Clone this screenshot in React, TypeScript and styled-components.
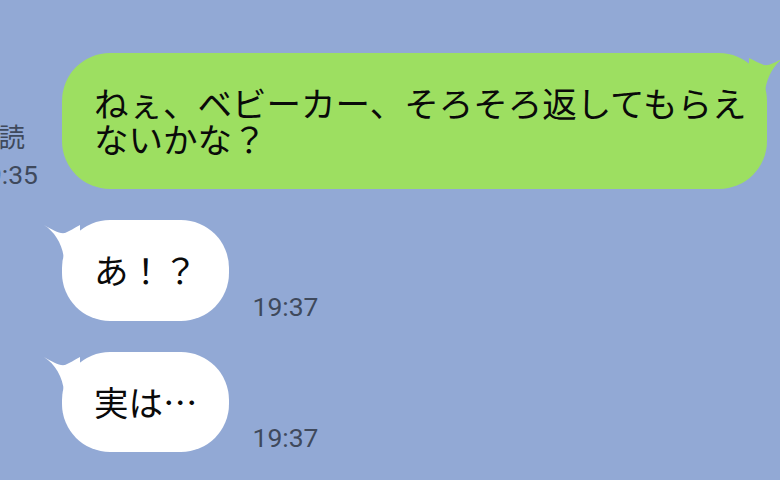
import React from "react";
import styled, { createGlobalStyle } from "styled-components";

const GlobalStyle = createGlobalStyle`
    html, body {
        margin: 0;
        padding: 0;
        background: #92a9d5;
        overflow: hidden;
    }
    #root {
        width: 780px;
        height: 480px;
    }
`;

type Side = "me" | "them";

interface MessageProps {
    side: Side;
    text: string;
    read?: boolean;
    time: string;
}

const Message: React.FunctionComponent<MessageProps> = ({ side, text, read, time }) => {
    const meta = (
        <Meta>
            {read && <span>既読</span>}
            <span>{time}</span>
        </Meta>
    );
    return (
        <Row $side={side}>
            {side === "me" && meta}
            <Bubble $side={side}>
                <Tail $side={side} width="36" height="40" viewBox="0 0 36 40">
                    {side === "them" ? (
                        <path d="M0 5 C9 10 15 14 21 13 C26 11 30 8 36 5 L36 40 L20 40 C19 25 11 12 0 5 Z" />
                    ) : (
                        <path d="M36 4 C27 9 21 13 15 12 C10 10 6 8 0 5 L0 40 L16 40 C17 25 25 11 36 4 Z" />
                    )}
                </Tail>
                {text}
            </Bubble>
            {side === "them" && meta}
        </Row>
    );
};

export default function App() {
    return (
        <>
            <GlobalStyle />
            <Chat>
                <Message side="me" read time="19:35" text="ねぇ、ベビーカー、そろそろ返してもらえないかな？" />
                <Message side="them" time="19:37" text="あ！？" />
                <Message side="them" time="19:37" text="実は…" />
            </Chat>
        </>
    );
}

const Chat = styled.div`
    display: flex;
    flex-direction: column;
    gap: 31px;
    padding: 53px 13px 0 62px;
    width: 780px;
    height: 480px;
    box-sizing: border-box;
`;

const Row = styled.div<{ $side: Side }>`
    display: flex;
    align-items: flex-end;
    justify-content: ${(p) => (p.$side === "me" ? "flex-end" : "flex-start")};
    gap: 24px;
`;

const Bubble = styled.div<{ $side: Side }>`
    position: relative;
    flex-shrink: 0;
    max-width: 705px;
    box-sizing: border-box;
    padding: 32px 16px 33px 32px;
    padding-right: ${(p) => (p.$side === "me" ? "16px" : "31px")};
    border-radius: 48px;
    background: ${(p) => (p.$side === "me" ? "#9ddf61" : "#ffffff")};
    color: #0a0a0a;
    font-family: "Noto Sans CJK JP", "Noto Sans", sans-serif;
    font-size: 34.5px;
    line-height: 35.5px;
`;

const Tail = styled.svg<{ $side: Side }>`
    position: absolute;
    top: 0;
    ${(p) => (p.$side === "them" ? "left: -18px;" : "right: -18px;")}
    fill: ${(p) => (p.$side === "me" ? "#9ddf61" : "#ffffff")};
`;

const Meta = styled.div`
    display: flex;
    flex-direction: column;
    align-items: flex-start;
    flex-shrink: 0;
    margin-bottom: -4px;
    color: #3f495c;
    font-family: Roboto, "Noto Sans CJK JP", sans-serif;
    font-size: 26.5px;
    line-height: 37px;
`;
